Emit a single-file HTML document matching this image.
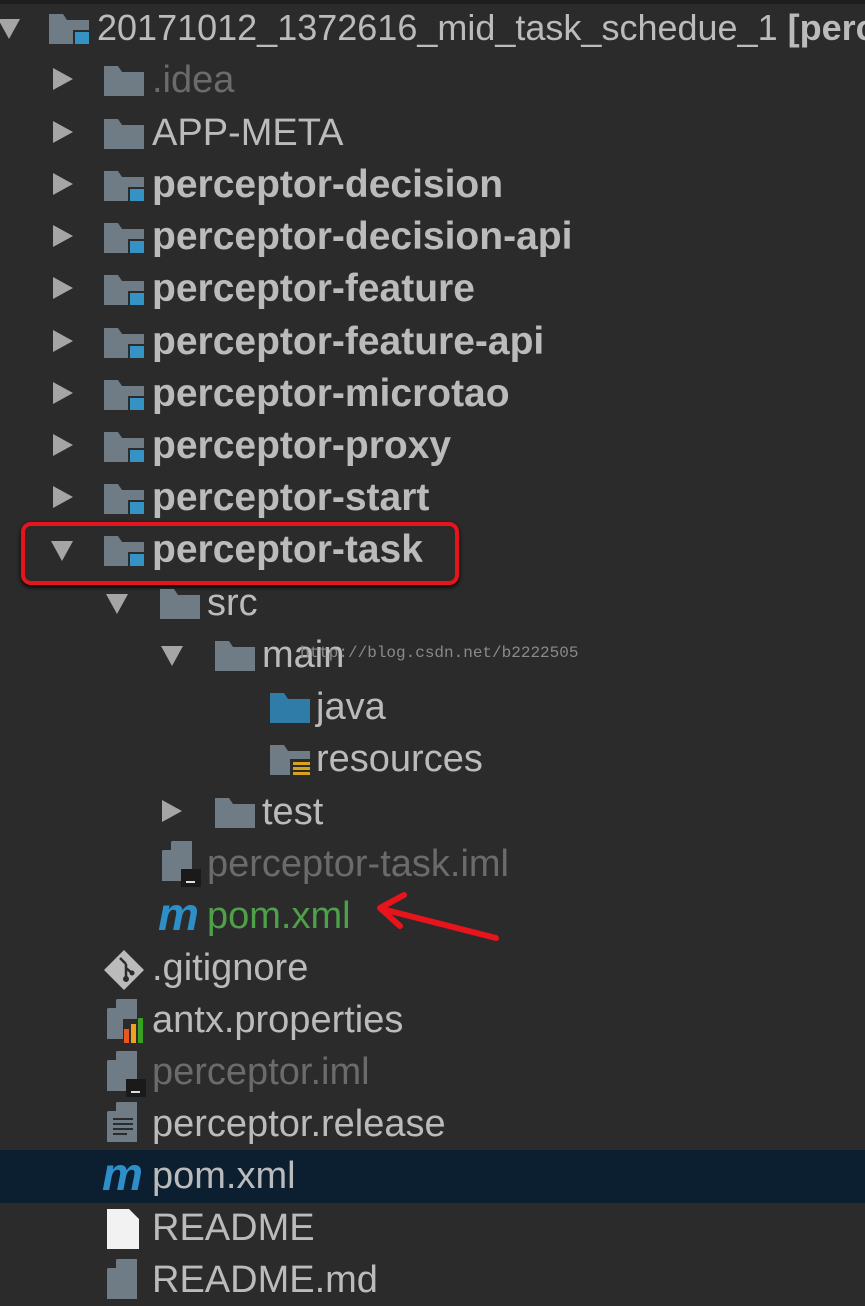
<!DOCTYPE html>
<html><head><style>
body{margin:0;width:865px;height:1286px;background:#2b2b2c;overflow:hidden;position:relative;font-family:"Liberation Sans",sans-serif;}
.r{position:absolute;left:0;width:865px;height:52px;overflow:hidden}
.t{position:absolute;top:4px;font-size:38px;color:#bbbbbb;white-space:nowrap;line-height:44px}
.b{font-weight:bold;font-size:39px}
.dim{color:#6b6b6b}
.g{color:#4ea049}
.m{position:absolute;top:-2px;color:#2d8ec8;font-style:italic;font-weight:bold;font-size:46px;line-height:52px}
.ar{position:absolute;top:14px;width:0;height:0;border-top:11px solid transparent;border-bottom:11px solid transparent;border-left:20px solid #a5a5a5}
.ad{position:absolute;top:17px;width:0;height:0;border-left:11px solid transparent;border-right:11px solid transparent;border-top:20px solid #a5a5a5}
.f{position:absolute;top:12px;width:40px;height:30px}
</style></head><body>
<div style="position:absolute;left:0;top:0;width:865px;height:4px;background:#1e1e1e"></div>
<div style="position:absolute;left:0;top:1150px;width:865px;height:53px;background:#0c1f30"></div>

<svg width="0" height="0" style="position:absolute">
<defs>
<g id="fold"><path d="M0 0h14l4 6h22v24H0z" fill="#6f7c86"/></g>
<g id="mod"><path d="M0 0h14l4 6h22v24H0z" fill="#6f7c86"/><rect x="24" y="16" width="18" height="18" fill="#2b2b2c"/><rect x="26" y="18" width="15" height="15" fill="#3592c4"/></g>
</defs></svg>

<div class="r" style="top:2px"><div class="ad" style="left:-2px"></div><svg class="f" style="left:49px" width="44" height="36"><use href="#mod"/></svg><div class="t" style="left:97px;font-size:36px">20171012_1372616_mid_task_schedue_1 <b>[perc</b></div></div>
<div class="r" style="top:54px"><div class="ar" style="left:53px"></div><svg class="f" style="left:104px" width="44" height="36"><use href="#fold"/></svg><div class="t dim" style="left:152px">.idea</div></div>
<div class="r" style="top:107px"><div class="ar" style="left:53px"></div><svg class="f" style="left:104px" width="44" height="36"><use href="#fold"/></svg><div class="t" style="left:152px">APP-META</div></div>
<div class="r" style="top:159px"><div class="ar" style="left:53px"></div><svg class="f" style="left:104px" width="44" height="36"><use href="#mod"/></svg><div class="t b" style="left:152px">perceptor-decision</div></div>
<div class="r" style="top:211px"><div class="ar" style="left:53px"></div><svg class="f" style="left:104px" width="44" height="36"><use href="#mod"/></svg><div class="t b" style="left:152px">perceptor-decision-api</div></div>
<div class="r" style="top:263px"><div class="ar" style="left:53px"></div><svg class="f" style="left:104px" width="44" height="36"><use href="#mod"/></svg><div class="t b" style="left:152px">perceptor-feature</div></div>
<div class="r" style="top:316px"><div class="ar" style="left:53px"></div><svg class="f" style="left:104px" width="44" height="36"><use href="#mod"/></svg><div class="t b" style="left:152px">perceptor-feature-api</div></div>
<div class="r" style="top:368px"><div class="ar" style="left:53px"></div><svg class="f" style="left:104px" width="44" height="36"><use href="#mod"/></svg><div class="t b" style="left:152px">perceptor-microtao</div></div>
<div class="r" style="top:420px"><div class="ar" style="left:53px"></div><svg class="f" style="left:104px" width="44" height="36"><use href="#mod"/></svg><div class="t b" style="left:152px">perceptor-proxy</div></div>
<div class="r" style="top:472px"><div class="ar" style="left:53px"></div><svg class="f" style="left:104px" width="44" height="36"><use href="#mod"/></svg><div class="t b" style="left:152px">perceptor-start</div></div>
<div class="r" style="top:524px"><div class="ad" style="left:51px"></div><svg class="f" style="left:104px" width="44" height="36"><use href="#mod"/></svg><div class="t b" style="left:152px">perceptor-task</div></div>
<div style="position:absolute;left:21px;top:522px;width:430px;height:55px;border:4px solid #e8141b;border-radius:10px;box-shadow:0 2px 4px #000"></div>
<div class="r" style="top:577px"><div class="ad" style="left:106px"></div><svg class="f" style="left:160px" width="44" height="36"><use href="#fold"/></svg><div class="t" style="left:207px">src</div></div>
<div class="r" style="top:629px"><div class="ad" style="left:161px"></div><svg class="f" style="left:215px" width="44" height="36"><use href="#fold"/></svg><div class="t" style="left:262px">main</div></div>
<div style="position:absolute;left:300px;top:644px;font-family:'Liberation Mono',monospace;font-size:16px;color:#8a8a8a">http://blog.csdn.net/b2222505</div>
<div class="r" style="top:681px"><svg class="f" style="left:270px" width="44" height="36"><path d="M0 0h14l4 6h22v24H0z" fill="#2f7ca8"/></svg><div class="t" style="left:316px">java</div></div>
<div class="r" style="top:733px"><svg class="f" style="left:270px" width="44" height="40"><path d="M0 0h14l4 6h22v24H0z" fill="#6f7c86"/><rect x="20" y="14" width="22" height="22" fill="#2b2b2c"/><g fill="#d9a21c"><rect x="23" y="17" width="17" height="3"/><rect x="23" y="22" width="17" height="3"/><rect x="23" y="27" width="17" height="3"/><rect x="23" y="32" width="17" height="3"/></g></svg><div class="t" style="left:316px">resources</div></div>
<div class="r" style="top:786px"><div class="ar" style="left:162px"></div><svg class="f" style="left:215px" width="44" height="36"><use href="#fold"/></svg><div class="t" style="left:262px">test</div></div>
<div class="r" style="top:838px"><svg style="position:absolute;left:162px;top:3px" width="40" height="46"><path d="M10 0h20v40H0V10z" fill="#6f7c86"/><path d="M0 9h9V0z" fill="#2b2b2c"/><rect x="19" y="28" width="20" height="18" fill="#1a1a1a"/><rect x="24" y="40" width="9" height="2" fill="#ddd"/></svg><div class="t dim" style="left:207px">perceptor-task.iml</div></div>
<div class="r" style="top:890px"><div class="m" style="left:158px">m</div><div class="t g" style="left:207px">pom.xml</div></div>
<svg style="position:absolute;left:370px;top:890px" width="140" height="60"><path d="M126 48 L16 20" stroke="#e8141b" stroke-width="6" stroke-linecap="round" fill="none"/><path d="M34 5 L10 18 L30 36" stroke="#e8141b" stroke-width="6" stroke-linecap="round" stroke-linejoin="round" fill="none"/></svg>
<div class="r" style="top:942px"><svg style="position:absolute;left:104px;top:8px" width="40" height="40"><path d="M20 0L40 20L20 40L0 20z" fill="#bbbbbb"/><path d="M16 8L22 14M22 14V28M22 18L28 23" stroke="#2b2b2c" stroke-width="2.5" fill="none"/><circle cx="22" cy="29" r="3" fill="#2b2b2c"/><circle cx="28" cy="23" r="2.5" fill="#2b2b2c"/></svg><div class="t" style="left:152px">.gitignore</div></div>
<div class="r" style="top:994px"><svg style="position:absolute;left:107px;top:5px" width="40" height="44"><path d="M10 0h20v40H0V10z" fill="#6f7c86"/><path d="M0 9h9V0z" fill="#2b2b2c"/><rect x="16" y="20" width="24" height="24" fill="#2b2b2c"/><rect x="17" y="30" width="5" height="14" fill="#e8571c"/><rect x="24" y="25" width="5" height="19" fill="#f0a020"/><rect x="31" y="19" width="5" height="25" fill="#3aa020"/></svg><div class="t" style="left:152px">antx.properties</div></div>
<div class="r" style="top:1046px"><svg style="position:absolute;left:107px;top:5px" width="40" height="46"><path d="M10 0h20v40H0V10z" fill="#6f7c86"/><path d="M0 9h9V0z" fill="#2b2b2c"/><rect x="19" y="28" width="20" height="18" fill="#1a1a1a"/><rect x="24" y="40" width="9" height="2" fill="#ddd"/></svg><div class="t dim" style="left:152px">perceptor.iml</div></div>
<div class="r" style="top:1098px"><svg style="position:absolute;left:107px;top:4px" width="40" height="44"><path d="M10 0h20v40H0V10z" fill="#6f7c86"/><path d="M0 9h9V0z" fill="#2b2b2c"/><g fill="#2b2b2c"><rect x="6" y="16" width="20" height="2"/><rect x="6" y="21" width="20" height="2"/><rect x="6" y="26" width="20" height="2"/><rect x="6" y="31" width="14" height="2"/></g></svg><div class="t" style="left:152px">perceptor.release</div></div>
<div class="r" style="top:1150px"><div class="m" style="left:102px">m</div><div class="t" style="left:152px">pom.xml</div></div>
<div class="r" style="top:1202px"><svg style="position:absolute;left:107px;top:7px" width="34" height="42"><path d="M0 0h22l10 10v30H0z" fill="#f2f2f2"/></svg><div class="t" style="left:152px">README</div></div>
<div class="r" style="top:1254px"><svg style="position:absolute;left:107px;top:5px" width="34" height="42"><path d="M10 0h20v40H0V10z" fill="#6f7c86"/><path d="M0 9h9V0z" fill="#2b2b2c"/></svg><div class="t" style="left:152px">README.md</div></div>
</body></html>
